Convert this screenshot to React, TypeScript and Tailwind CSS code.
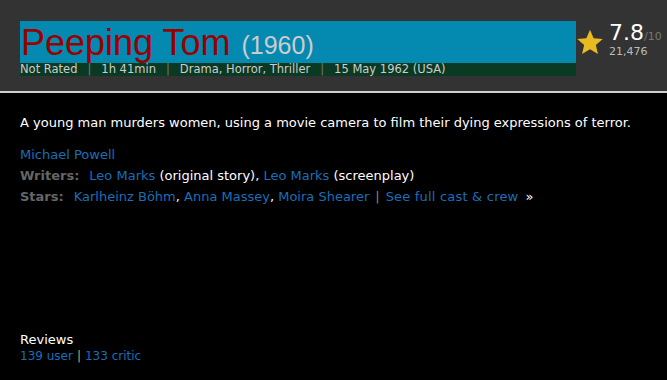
export default function App() {
  return (
    <div className="w-[667px] h-[380px] bg-black font-['DejaVu_Sans',sans-serif] overflow-hidden">
      <div className="h-[93px] bg-[#333333] border-b-2 border-[#cfcfcf] pt-[21px] pl-[20px] flex">
        <div className="w-[556px]">
          <div className="h-[42px] bg-[#0489b1] flex items-end pl-[1px] font-['Liberation_Sans',Arial,sans-serif]">
            <span className="text-[36px] leading-[41px] text-[#990000]">Peeping Tom</span>
            <span className="text-[25px] leading-[35px] text-[#cccccc] ml-[11px]">(1960)</span>
          </div>
          <div className="h-[13px] bg-[#0a3a24] text-[11.5px] leading-[13px] text-[#cccccc] flex items-center">
            <span>Not Rated</span>
            <span className="mx-[10px] text-[#777]">|</span>
            <span>1h 41min</span>
            <span className="mx-[10px] text-[#777]">|</span>
            <span>Drama, Horror, Thriller</span>
            <span className="mx-[10px] text-[#777]">|</span>
            <span>15 May 1962 (USA)</span>
          </div>
        </div>
        <div className="flex items-start pt-[5px]">
          <svg width="28" height="28" viewBox="0 0 24 24" className="mt-[2px]">
            <path d="M12 1.5l3.1 7.2 7.8.7-5.9 5.2 1.8 7.7L12 18.3l-6.8 4 1.8-7.7-5.9-5.2 7.8-.7z" fill="#e8bb21" />
          </svg>
          <div className="ml-[5px] -mt-[6px]">
            <div className="flex items-baseline">
              <span className="text-[22px] leading-[26px] text-white">7.8</span>
              <span className="text-[11px] text-[#777]">/10</span>
            </div>
            <div className="text-[11px] leading-[12px] text-[#bbbbbb]">21,476</div>
          </div>
        </div>
      </div>
      <div className="px-[20px] pt-[19px] text-[13px] leading-[21px] text-white">
        <p>A young man murders women, using a movie camera to film their dying expressions of terror.</p>
        <div className="mt-[11px]">
          <div><a className="text-[#1a6eb8]">Michael Powell</a></div>
          <div>
            <span className="font-bold text-[#666666] mr-[10px]">Writers:</span>
            <a className="text-[#1a6eb8]">Leo Marks</a> (original story), <a className="text-[#1a6eb8]">Leo Marks</a> (screenplay)
          </div>
          <div>
            <span className="font-bold text-[#666666] mr-[10px]">Stars:</span>
            <a className="text-[#1a6eb8]">Karlheinz Böhm</a>, <a className="text-[#1a6eb8]">Anna Massey</a>, <a className="text-[#1a6eb8]">Moira Shearer</a>
            <span className="text-[#888] mx-[6px]">|</span>
            <a className="text-[#1a6eb8] tracking-[0.2px]">See full cast &amp; crew</a>
            <span className="ml-[7px]">»</span>
          </div>
        </div>
        <div className="mt-[124px]">
          <div className="leading-[17px]">Reviews</div>
          <div className="text-[12px] leading-[15px] mt-[1px]">
            <a className="text-[#1a6eb8]">139 user</a>
            <span className="text-[#b5b06a] mx-[4px]">|</span>
            <a className="text-[#1a6eb8]">133 critic</a>
          </div>
        </div>
      </div>
    </div>
  );
}
